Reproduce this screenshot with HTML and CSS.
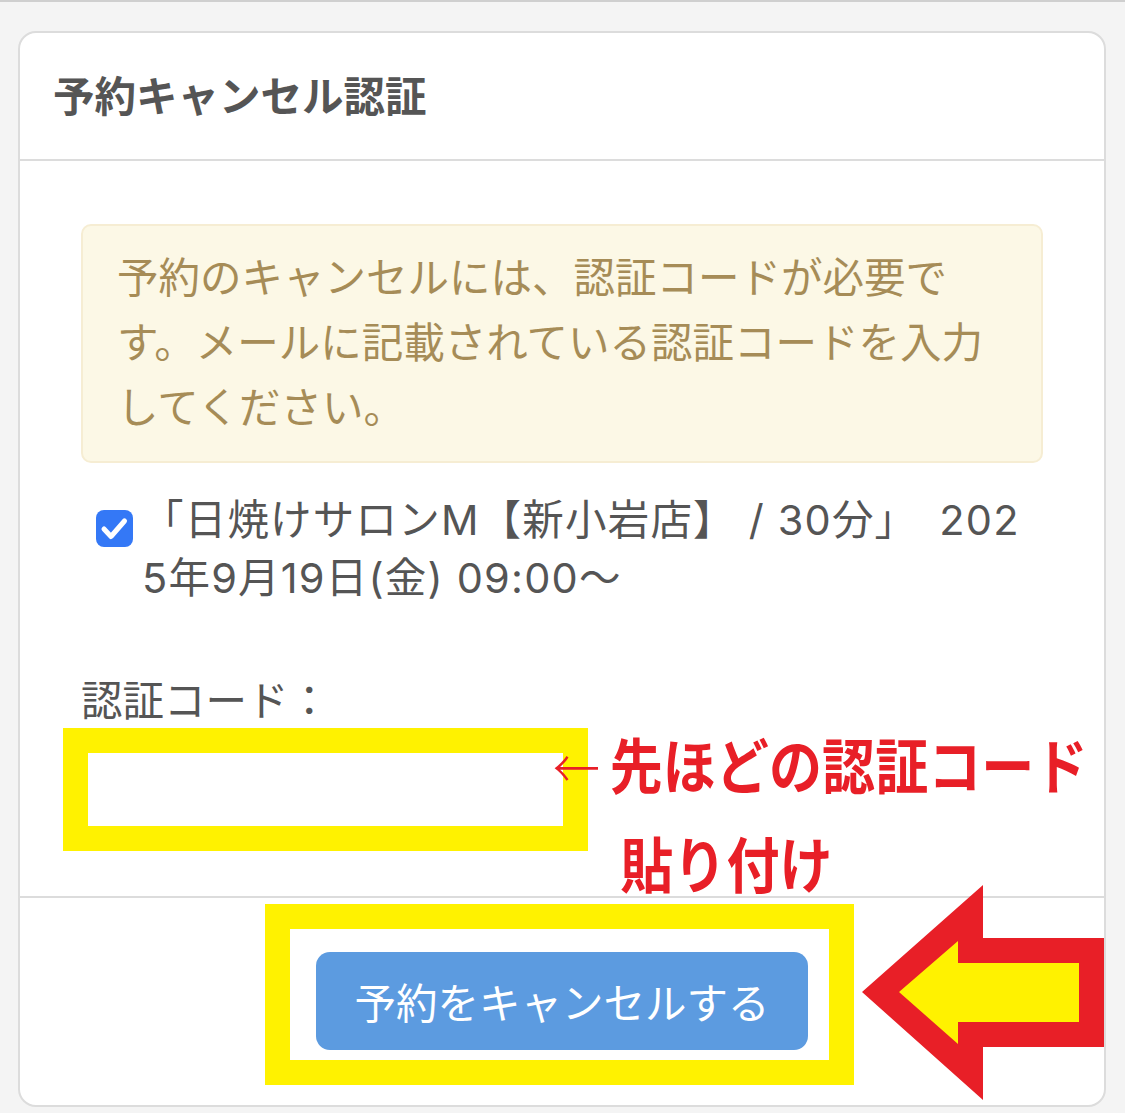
FILE: index.html
```html
<!DOCTYPE html>
<html lang="ja">
<head>
    <meta charset="UTF-8">
    <meta name="viewport" content="width=device-width, initial-scale=1.0">
    <title>予約キャンセル認証</title>
    <link rel="stylesheet" href="styles.css">
</head>
<body>

<div class="panel">
    <div class="panel-heading">
        <h3 class="panel-title">予約キャンセル認証</h3>
    </div>

    <div class="panel-body">
        <div class="alert">予約のキャンセルには、認証コードが必要です。メールに記載されている認証コードを入力してください。</div>

        <label class="reserve-item">
            <span class="check-box">
                <svg width="37" height="37" viewBox="0 0 37 37">
                    <rect width="37" height="37" rx="8" fill="#3478f6"/>
                    <path d="M8 19 L15 26.5 L28.5 11" fill="none" stroke="#fff" stroke-width="5" stroke-linecap="round" stroke-linejoin="round"/>
                </svg>
            </span>
            <span class="reserve-text">「日焼けサロンM【新小岩店】 / 30分」　2025年9月19日(金) 09:00〜</span>
        </label>

        <label class="code-label" for="authCode">認証コード：</label>
        <div class="code-field mark-box">
            <input type="text" id="authCode">
        </div>
    </div>

    <div class="panel-footer">
        <div class="mark-box mark-button">
            <button type="button">予約をキャンセルする</button>
        </div>
    </div>

    <!-- annotations drawn over the screenshot -->
    <div class="note">
        <div><span class="note-arrow">←</span>先ほどの認証コード</div>
        <div class="note-second">貼り付け</div>
    </div>
    <svg class="big-arrow" width="242" height="217" viewBox="0 0 242 217">
        <polygon points="0,108 121,1 121,54 242,54 242,163 121,163 121,216" fill="#e81f27"/>
        <polygon points="37,108 96,57 96,79 217,79 217,138 96,138 96,160" fill="#fff200"/>
    </svg>
</div>

</body>
</html>
```

FILE: styles.css
```css
html {
    background: #f4f4f4;
}
body {
    margin: 0;
    border-top: 2px solid #cfcfcf;
    padding: 29px 19px 0 18px;
    font-family: Inter, "Noto Sans CJK JP", sans-serif;
    font-size: 41.5px;
    color: #555;
}
.panel {
    position: relative; /* annotations sit on top of the panel */
    background: #fff;
    border: 2px solid #dcdcdc;
    border-radius: 18px;
}
.panel-heading {
    padding: 39px 33px 37px;
    border-bottom: 2px solid #dcdcdc;
}
.panel-title {
    margin: 0;
    font-size: 41.5px;
    line-height: 50px;
    font-weight: bold;
    color: #555;
}
.panel-body {
    padding: 63px 61px 70px;
}
.alert {
    padding: 20px 34px;
    background: #fcf8e6;
    border: 2px solid #f6edd3;
    border-radius: 10px;
    color: #a68c57;
    line-height: 65px;
}
.reserve-item {
    display: flex;
    align-items: flex-start;
    margin-top: 28px;
    line-height: 58px;
}
.check-box {
    flex: none;
    width: 37px;
    height: 37px;
    margin: 19px 9px 0 15px;
}
.check-box svg {
    display: block;
}
.reserve-text {
    word-break: break-all;
    letter-spacing: 1.2px;
}
.code-label {
    display: block;
    margin-top: 65px;
    line-height: 58px;
}
.code-field {
    width: 475px;
    height: 73px;
    margin: 23px 0 0 7px;
}
.code-field input {
    display: block;
    width: 100%;
    height: 100%;
    box-sizing: border-box;
    border: 0;
    padding: 0 20px;
    font: inherit;
    outline: none;
}
.panel-footer {
    display: flex;
    justify-content: center;
    padding: 54px 0 55px;
    border-top: 2px solid #dcdcdc;
}
.panel-footer button {
    display: block;
    height: 98px;
    padding: 0 38px;
    border: none;
    border-radius: 14px;
    background: #5c9be0;
    color: #fff;
    font: inherit;
    cursor: pointer;
}

/* yellow frames */
.mark-box {
    position: relative;
}
.mark-box::after {
    content: "";
    position: absolute;
    top: -25px;
    right: -25px;
    bottom: -25px;
    left: -25px;
    border: 25px solid #fff200;
    pointer-events: none;
}
.mark-button::after {
    top: -48px;
    right: -46px;
    bottom: -35px;
    left: -51px;
}

/* red note */
.note {
    position: absolute;
    left: 533px;
    top: 682px;
    color: #e81f27;
    font-family: "Noto Sans CJK JP", sans-serif;
    font-size: 60px;
    font-weight: bold;
    line-height: 95px;
    white-space: nowrap;
    transform: scaleX(0.885); /* narrow bold face */
    transform-origin: 0 0;
}
.note-arrow {
    display: inline-block;
    width: 64px;
    font-size: 53px;
    font-weight: 300;
}
.note-second {
    padding-left: 76px;
}
.big-arrow {
    position: absolute;
    left: 842px;
    top: 851px;
}
```
